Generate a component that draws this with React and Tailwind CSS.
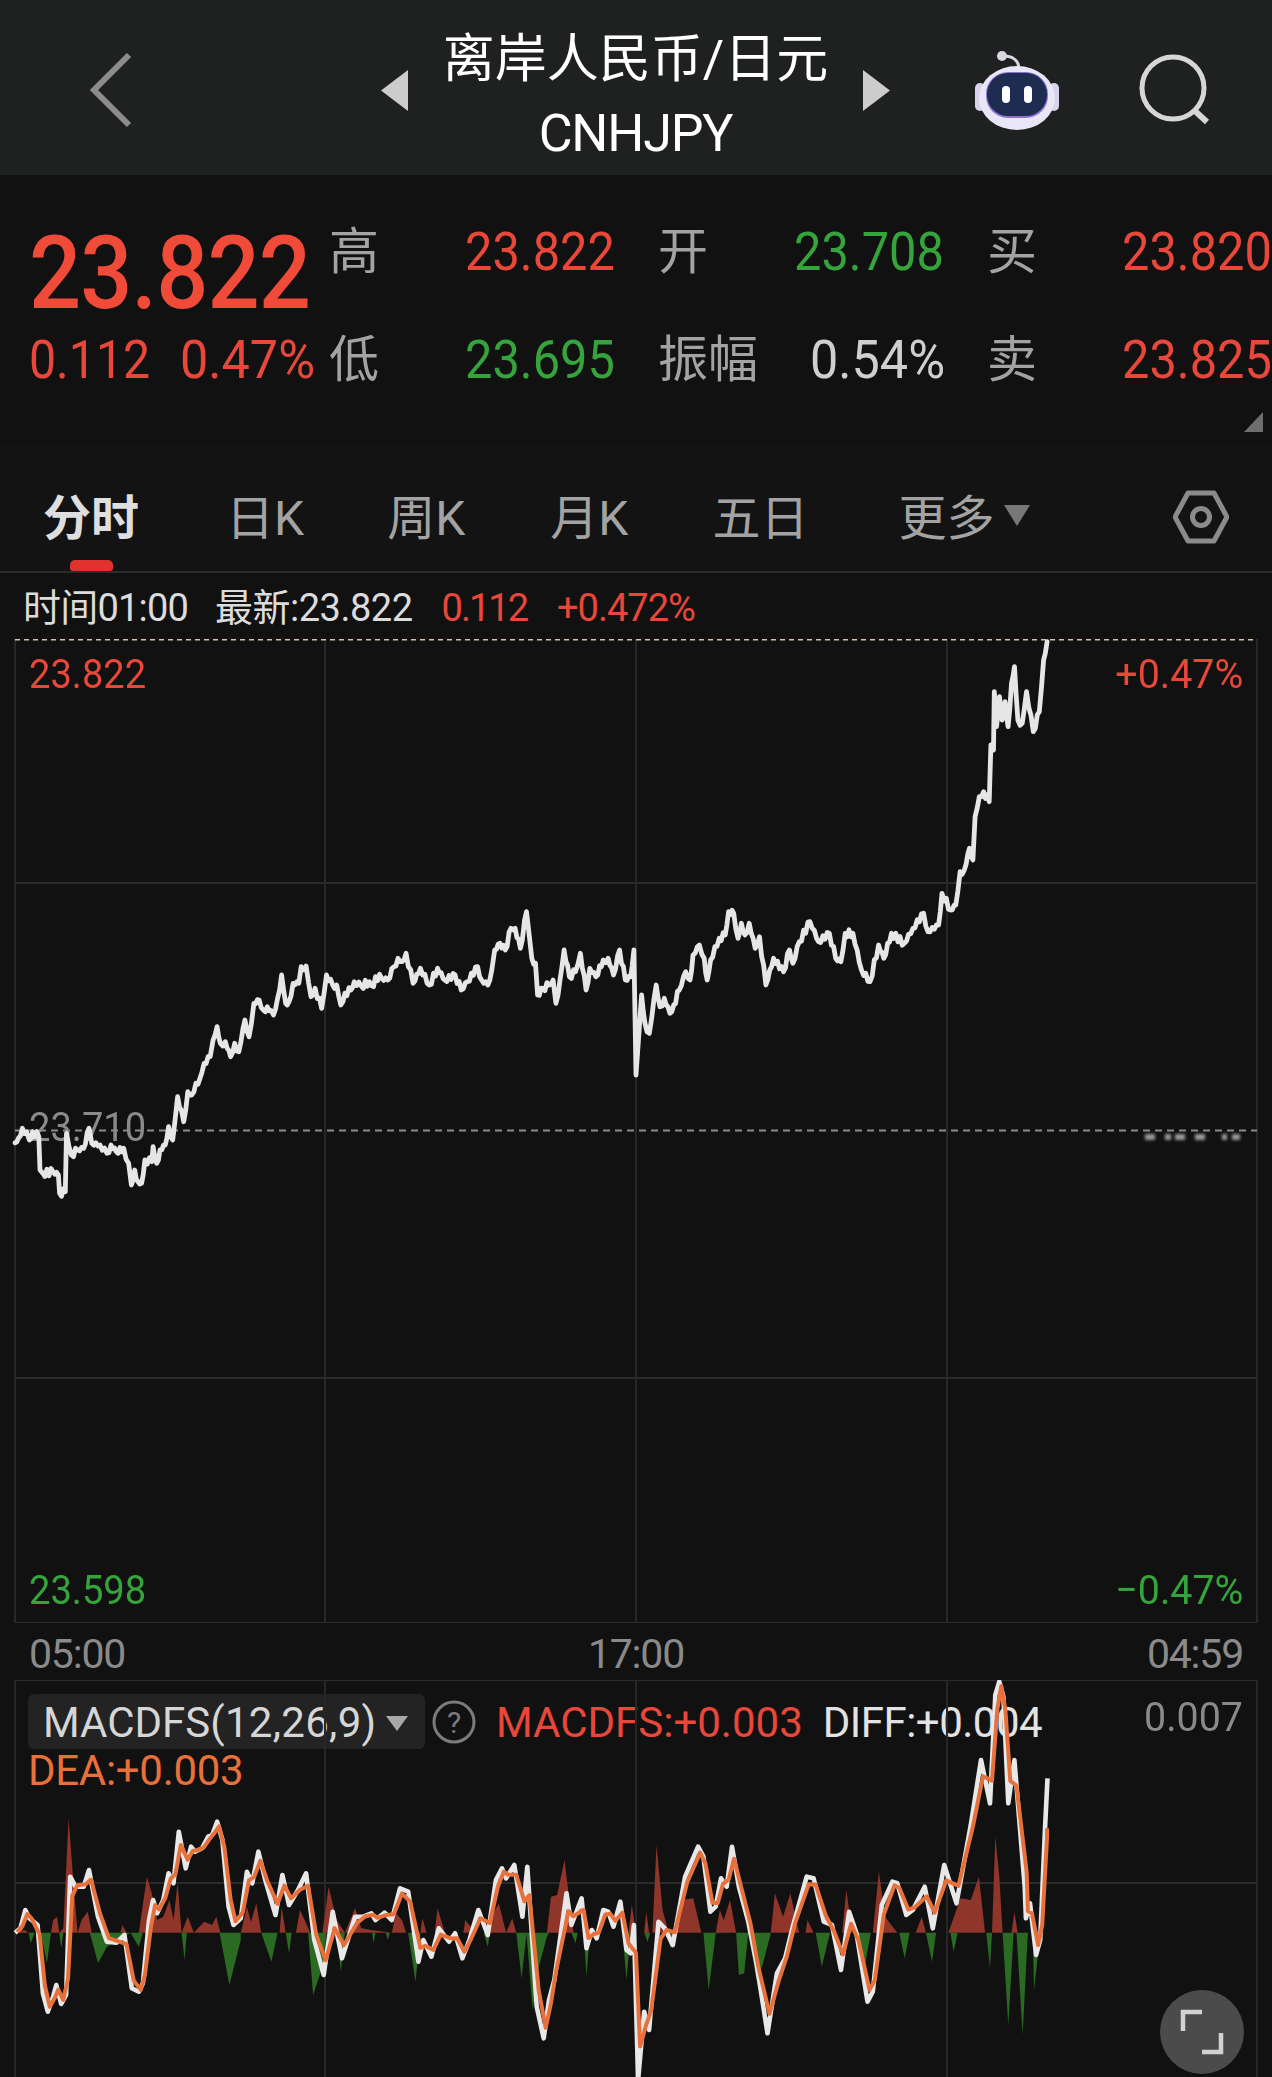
import React from 'react';

// traced from the chart, in crop coordinates (see the from* helpers below)
const priceLeft = [37,848,45,835,55,805,65,815,72,840,80,815,95,830,98,930,105,940,130,935,143,945,146,1000,160,995,163,820,175,885,190,870,205,865,218,805,225,850,245,855,262,880,272,855,285,875,303,865,315,910,322,975,330,930,338,965,347,970,355,900,372,905,375,860,384,910,392,870,405,855,413,800,423,840,435,710,450,785,460,695,470,705,480,670,490,655,500,610,515,590,522,540,532,500,540,550,552,545,565,590,575,550,585,575,600,480,610,530,622,430,635,420,645,450,655,440,670,465,680,415,690,345,700,430,708,425,718,370,732,370,738,320,750,318,762,410,772,385,788,445,800,345,815,375,825,375,835,435,845,400,860,390,868,365,885,378,905,365,915,380,920,350,935,355,950,360,965,320,975,295,985,305,995,280,1012,370,1030,325,1052,375,1072,325,1090,360,1115,345,1130,390,1145,365,1170,320,1180,360,1195,375,1205,330,1212,270,1225,250,1238,270,1252,205,1262,205,1275,265,1290,155,1297,230,1303,295,1312,310,1317,405,1330,385,1345,375,1355,360,1362,430,1372,360,1382,270,1395,350,1410,335,1422,280,1436,390,1445,325,1460,350,1478,300,1490,295,1503,345,1518,270,1532,360,1545,350,1553,270];
const priceRight = [84,1305,97,1065,105,1150,115,1180,131,1035,140,1100,150,1075,163,1120,172,1095,185,1050,200,995,210,1020,217,945,232,915,243,955,250,1020,258,960,278,895,292,885,300,815,312,820,322,895,330,850,338,885,348,850,362,925,372,890,387,1035,405,955,428,995,442,930,450,970,465,905,490,845,510,905,535,880,550,955,562,965,572,880,590,880,610,990,630,1025,650,915,662,955,680,880,710,910,730,865,755,820,765,875,790,855,798,760,818,810,830,795,840,695,850,690,862,625,870,660,875,530,885,470,895,455,908,485,912,315,918,330,920,155,925,260,932,170,938,240,945,185,952,260,960,130,967,80,975,240,985,250,995,155,1011,275,1025,215,1035,60,1043,5];

const diffLeft = [37,998,50,985,62,930,72,955,92,975,105,1180,117,1235,130,1190,138,1155,150,1212,162,1185,172,830,185,860,205,860,218,810,240,950,262,1025,285,1028,305,1005,323,1165,340,1175,350,1150,365,960,375,900,385,940,400,900,413,820,425,850,438,695,455,805,468,740,478,755,495,745,510,710,520,705,532,665,545,720,560,920,572,975,590,955,605,815,618,850,633,755,650,840,675,945,692,825,708,915,730,870,750,820,770,1020,793,1125,815,935,838,1075,870,950,890,950,910,940,920,960,942,938,960,960,980,865,1000,875,1025,1085,1037,1020,1057,1070,1075,985,1100,1025,1115,1000,1133,1075,1150,1020,1172,930,1195,1005,1215,840,1230,805,1240,835,1260,795,1280,950,1292,800,1315,1220,1332,1315,1345,1200,1358,1140,1388,880,1400,975,1425,895,1437,1045,1450,990,1462,1015,1478,930,1490,935,1503,980,1520,905,1535,1050,1545,1060,1553,975];
const diffRight = [15,1440,30,1235,42,1290,65,965,80,985,100,1035,130,830,162,740,175,770,192,935,205,920,218,835,232,860,245,740,262,860,285,965,305,1090,332,1300,355,1120,375,1075,395,975,428,830,445,835,470,965,490,975,512,1110,532,935,550,1000,577,1205,590,1175,612,915,638,845,650,850,672,945,688,930,717,860,737,985,765,795,795,910,830,675,855,480,877,610,890,285,900,245,910,290,922,610,937,480,962,860,965,955,975,910,990,1065,1000,1020,1012,680,1018,535];

const redLeft = [37,998,60,990,70,998,125,998,130,960,140,950,145,998,155,985,168,655,180,850,190,998,200,960,215,935,225,998,295,998,300,975,310,998,340,998,360,830,372,880,385,960,400,950,415,900,425,960,435,850,445,998,460,950,475,998,500,965,520,975,530,950,540,998,590,998,605,920,615,965,628,910,640,998,685,998,690,920,700,998,725,998,735,930,750,970,760,998,790,998,805,860,825,960,845,998,870,925,885,985,910,990,960,998,970,940,985,960,995,998,1030,998,1035,955,1045,998,1065,998,1072,925,1090,998,1135,998,1140,960,1165,998,1190,998,1200,960,1222,910,1240,998,1255,955,1265,998,1340,998,1350,890,1365,885,1383,780,1395,900,1405,998,1540,998,1548,915,1558,998];
const redRight = [30,998,35,935,42,998,50,998,60,735,75,930,90,998,110,998,120,900,150,895,170,998,205,998,215,930,225,960,240,900,255,998,340,998,350,880,370,950,388,880,400,950,410,998,425,998,430,960,445,998,515,998,525,870,540,998,590,998,605,815,620,950,650,998,695,998,710,950,720,998,775,998,805,895,830,900,850,830,865,998,882,998,890,710,900,830,908,998,930,998,937,935,945,998,1018,998,1018,685,1018,998];
const greenLeft = [70,998,75,1030,85,998,100,998,115,1090,125,998,145,998,150,1045,155,998,220,998,240,1090,262,1040,320,998,340,1040,350,998,445,998,452,1080,458,998,538,998,562,1155,590,1020,590,998,640,998,665,1085,680,998,700,998,708,1060,715,998,755,998,767,1185,790,1100,800,998,825,998,835,1115,845,998,912,998,915,1030,920,998,945,998,950,1020,955,998,1000,998,1018,1145,1030,998,1185,998,1195,1040,1200,998,1265,998,1278,1135,1290,1000,1305,1230,1320,1100,1340,1010,1345,998,1400,998,1410,1030,1415,998,1430,998,1437,1130,1445,998,1525,998,1535,1140,1545,998];
const greenRight = [30,998,38,1025,45,998,85,998,95,1045,100,998,175,998,188,1170,205,1000,255,998,262,1125,275,1120,285,1000,305,1140,320,1095,340,1000,340,998,450,998,465,1100,485,998,545,998,570,1100,585,998,655,998,668,1075,680,998,720,998,735,1085,745,998,780,998,788,1055,798,998,868,998,877,1105,882,998,908,998,922,1275,935,998,942,998,957,1305,970,998,982,1000,985,1170,995,1060,1000,998];

const toPoints = (flat, fx, fy) => {
  const pts = [];
  for (let i = 0; i < flat.length; i += 2) pts.push([fx(flat[i]), fy(flat[i + 1])]);
  return pts;
};

// the real line ticks every minute, so add some small wiggle between traced points
const addTicks = (pts) => {
  const out = [];
  pts.forEach((p, i) => {
    out.push(p);
    const next = pts[i + 1];
    if (!next || Math.abs(next[1] - p[1]) > 60) return;
    const steps = Math.max(1, Math.round((next[0] - p[0]) / 2));
    for (let s = 1; s < steps; s++) {
      const t = s / steps;
      const wiggle = (s % 2 ? 1 : -1) * (1.5 + (i % 3));
      out.push([p[0] + (next[0] - p[0]) * t, p[1] + (next[1] - p[1]) * t + wiggle]);
    }
  });
  return out;
};

const pricePts = addTicks([
  ...toPoints(priceLeft, (x) => x / 2.45, (y) => 860 + y / 3),
  ...toPoints(priceRight, (x) => 600 + x / 2.333, (y) => 640 + y / 3),
]);

const macdX = (x) => x / 2.45;
const macdXr = (x) => 632 + x / 2.45;
const macdY = (y) => 1600 + y / 3;

const diffPts = [...toPoints(diffLeft, macdX, macdY), ...toPoints(diffRight, macdXr, macdY)];
const redPts = [...toPoints(redLeft, macdX, macdY), ...toPoints(redRight, macdXr, macdY)];
const greenPts = [...toPoints(greenLeft, macdX, macdY), ...toPoints(greenRight, macdXr, macdY)];

// DEA follows DIFF, just smoother and a touch late
const deaPts = diffPts.map((p, i) => {
  const prev = diffPts[Math.max(i - 1, 0)];
  const next = diffPts[Math.min(i + 1, diffPts.length - 1)];
  return [p[0] + 2, prev[1] * 0.15 + p[1] * 0.7 + next[1] * 0.15];
});
deaPts[deaPts.length - 1] = [1047, macdY(685)];

const str = (pts) => pts.map((p) => `${p[0].toFixed(1)},${p[1].toFixed(1)}`).join(' ');

const verticals = [15, 325, 636, 947, 1257];

const BackIcon = () => (
  <svg width="44" height="76" viewBox="0 0 44 76" fill="none">
    <path d="M40 3 L5 38 L40 73" stroke="#8c8c8c" strokeWidth="6" />
  </svg>
);

const RobotIcon = () => (
  <svg width="84" height="80" viewBox="0 0 84 80" fill="none">
    <path d="M29 6 C36 6 43 9 44 18" stroke="#d9d6e6" strokeWidth="3" />
    <circle cx="27" cy="6" r="5" fill="#d8d8de" />
    <rect x="0" y="33" width="10" height="28" rx="5" fill="#d7d3ea" />
    <rect x="74" y="33" width="10" height="28" rx="5" fill="#d7d3ea" />
    <ellipse cx="42" cy="48" rx="38" ry="32" fill="#e9e6f7" />
    <rect x="11" y="22" width="62" height="46" rx="22" fill="#8a74cf" />
    <rect x="12" y="23" width="60" height="43" rx="21" fill="#1f2c52" />
    <rect x="27" y="36" width="8" height="17" rx="4" fill="#ffffff" />
    <rect x="49" y="36" width="8" height="17" rx="4" fill="#ffffff" />
  </svg>
);

const SearchIcon = () => (
  <svg width="72" height="72" viewBox="0 0 72 72" fill="none">
    <circle cx="34" cy="34" r="31" stroke="#d6d6d6" strokeWidth="5" />
    <path d="M56 57 L68 68" stroke="#d6d6d6" strokeWidth="6" />
  </svg>
);

const HexIcon = () => (
  <svg width="56" height="54" viewBox="0 0 56 54" fill="none">
    <path d="M15 3 H41 L54 27 L41 51 H15 L2 27 Z" stroke="#8b8b8b" strokeWidth="5" strokeLinejoin="round" />
    <circle cx="28" cy="27" r="8.5" stroke="#8b8b8b" strokeWidth="5" />
  </svg>
);

const StatRow = ({ cells }) => (
  <div className="grid h-[108px] grid-cols-[136px_193px_136px_193px_135px_1fr] items-center whitespace-nowrap">
    {cells.map((c, i) => (
      <span key={i} className={c.className}>{c.text}</span>
    ))}
  </div>
);

// the app's digits are narrower than Roboto's
const label = 'text-[50px] leading-none text-[#a3a3a3]';
const red = 'inline-block origin-left scale-x-[0.92] text-[53px] leading-none text-[#e8473a]';
const green = 'inline-block origin-left scale-x-[0.92] text-[53px] leading-none text-[#36a43c]';
const axisL = 'absolute left-[29px] inline-block origin-left scale-x-[0.93] text-[41px] leading-[46px]';
const axisR = 'absolute right-[29px] inline-block origin-right scale-x-[0.96] text-[41px] leading-[46px]';

const Tab = ({ children, className }) => (
  <span className={`whitespace-nowrap text-[48px] leading-none ${className}`}>{children}</span>
);

const PriceChart = () => (
  <div className="relative h-[984px]">
    <span className={`${axisL} top-[12px] text-[#e8473a]`}>23.822</span>
    <span className={`${axisR} top-[12px] text-[#e8473a]`}>+0.47%</span>
    <span className={`${axisL} top-[465px] text-[#8a8a8a]`}>23.710</span>
    <span className={`${axisL} top-[928px] text-[#36a43c]`}>23.598</span>
    <span className={`${axisR} top-[928px] text-[#36a43c]`}>−0.47%</span>
    <svg className="absolute inset-0" width="1272" height="984" viewBox="0 639 1272 984" fill="none">
      {verticals.map((x) => (
        <line key={x} x1={x} y1="639" x2={x} y2="1623" stroke="#272727" strokeWidth="2" />
      ))}
      <line x1="15" y1="883" x2="1257" y2="883" stroke="#2b2b2b" strokeWidth="2" />
      <line x1="15" y1="1378" x2="1257" y2="1378" stroke="#2b2b2b" strokeWidth="2" />
      <line x1="15" y1="1623" x2="1257" y2="1623" stroke="#2b2b2b" strokeWidth="2" />
      <line x1="15" y1="639.5" x2="1257" y2="639.5" stroke="#d9c49e" strokeWidth="2" strokeDasharray="5 4" />
      <line x1="15" y1="1130.5" x2="1257" y2="1130.5" stroke="#8a8a8a" strokeWidth="2" strokeDasharray="7 5" />
      <polyline points={str(pricePts)} stroke="#e6e6e6" strokeWidth="4.8" strokeLinejoin="round" strokeLinecap="round" />
      <g className="blur-[1.5px]" fill="#9a9a9a">
        <rect x="1145" y="1134" width="10" height="6" />
        <rect x="1165" y="1134" width="6" height="6" />
        <rect x="1175" y="1134" width="10" height="6" />
        <rect x="1195" y="1134" width="10" height="6" />
        <rect x="1222" y="1134" width="5" height="6" />
        <rect x="1232" y="1134" width="8" height="6" />
      </g>
    </svg>
  </div>
);

const MacdChart = () => (
  <div className="relative h-[397px] overflow-hidden">
    <div className="absolute left-[28px] top-[14px] flex h-[55px] items-center whitespace-nowrap text-[42px] leading-none">
      <div className="flex h-[55px] w-[397px] items-center rounded-[6px] bg-[#232323] pl-[15px] pt-[3px] text-[#d6d6d6]">
        <span>MACDFS</span>
        <span className="tracking-[0.3px]">(12,26,9)</span>
        <svg className="ml-[9px]" width="22" height="15" viewBox="0 0 22 15">
          <path d="M0 0 H22 L11 15 Z" fill="#a8a8a8" />
        </svg>
      </div>
      <svg className="ml-[7px]" width="44" height="44" viewBox="0 0 44 44" fill="none">
        <circle cx="22" cy="22" r="20" stroke="#7b7b7b" strokeWidth="3" />
        <text x="22" y="33" textAnchor="middle" fontSize="30" fill="#7b7b7b">?</text>
      </svg>
      <span className="ml-[20px] pt-[3px] text-[#e8473a]">MACDFS:+0.003</span>
      <span className="ml-[20px] pt-[3px] tracking-[-0.5px] text-[#e3e3e3]">DIFF:+0.004</span>
    </div>
    <span className="absolute left-[28px] top-[68px] text-[42px] leading-[46px] tracking-[-0.3px] text-[#e8703a]">DEA:+0.003</span>
    <span className={`${axisR} top-[14px] text-[#8a8a8a]`}>0.007</span>
    <svg className="absolute inset-0" width="1272" height="397" viewBox="0 1680 1272 397" fill="none">
      {verticals.map((x) => (
        <line key={x} x1={x} y1="1680" x2={x} y2="2077" stroke="#272727" strokeWidth="2" />
      ))}
      <line x1="15" y1="1680" x2="1257" y2="1680" stroke="#2b2b2b" strokeWidth="2" />
      <line x1="15" y1="1883" x2="1257" y2="1883" stroke="#2b2b2b" strokeWidth="2" />
      <polygon points={str(redPts)} fill="#8f3529" />
      <polygon points={str(greenPts)} fill="#2a6a22" />
      <polyline points={str(diffPts)} stroke="#e8e8e8" strokeWidth="4.6" strokeLinejoin="round" />
      <polyline points={str(deaPts)} stroke="#e8703a" strokeWidth="4" strokeLinejoin="round" />
    </svg>
    <div className="absolute left-[1160px] top-[310px] flex h-[84px] w-[84px] items-center justify-center rounded-full bg-[#4b4b4b]">
      <svg width="44" height="46" viewBox="0 0 44 46" fill="none">
        <path d="M22 3 H3 V22" stroke="#d2d2d2" strokeWidth="4.5" />
        <path d="M22 43 H41 V24" stroke="#d2d2d2" strokeWidth="4.5" />
      </svg>
    </div>
  </div>
);

const App = () => {
  return (
    <div className="flex h-[2077px] w-[1272px] flex-col overflow-hidden bg-[#111111] font-[Roboto,'Noto_Sans_CJK_SC',sans-serif]">
      {/* top bar */}
      <header className="flex h-[175px] shrink-0 items-center bg-[#1f2020] pt-[5px]">
        <div className="ml-[89px] w-[292px]"><BackIcon /></div>
        <svg width="27" height="41" viewBox="0 0 27 41"><path d="M27 0 V41 L0 20.5 Z" fill="#cccccc" /></svg>
        <div className="flex w-[455px] flex-col items-center pt-[12px] text-white">
          <span className="text-[52px] leading-[62px]">离岸人民币/日元</span>
          <span className="mt-[14px] text-[52px] leading-[58px] tracking-[-1.2px]">CNHJPY</span>
        </div>
        <svg width="27" height="41" viewBox="0 0 27 41"><path d="M0 0 V41 L27 20.5 Z" fill="#cccccc" /></svg>
        <div className="ml-[85px]"><RobotIcon /></div>
        <div className="ml-[80px]"><SearchIcon /></div>
      </header>

      {/* quote */}
      <section className="relative flex h-[271px] shrink-0 bg-[#111111]">
        <div className="w-[329px] pl-[29px] pt-[38px] whitespace-nowrap">
          <div className="h-[120px] origin-left scale-x-[0.9] text-[102px] font-medium leading-[120px] tracking-[-1px] text-[#f04a38]">23.822</div>
          <div className="flex h-[54px] items-center text-[#e8473a] text-[53px] leading-none">
            <span className="inline-block w-[151px] origin-left scale-x-[0.91]">0.112</span>
            <span className="inline-block origin-left scale-x-[0.95]">0.47%</span>
          </div>
        </div>
        <div className="flex-1 pt-[23px]">
          <StatRow cells={[
            { text: '高', className: label },
            { text: '23.822', className: red },
            { text: '开', className: label },
            { text: '23.708', className: green },
            { text: '买', className: label },
            { text: '23.820', className: red },
          ]} />
          <StatRow cells={[
            { text: '低', className: label },
            { text: '23.695', className: green },
            { text: '振幅', className: label },
            { text: '0.54%', className: 'ml-[16px] inline-block origin-left scale-x-[0.95] text-[53px] leading-none text-[#cfcfcf]' },
            { text: '卖', className: label },
            { text: '23.825', className: red },
          ]} />
        </div>
        <svg className="absolute bottom-[14px] right-[9px]" width="19" height="20" viewBox="0 0 19 20">
          <path d="M19 0 V20 H0 Z" fill="#6e6e6e" />
        </svg>
      </section>

      {/* period tabs */}
      <nav className="relative flex h-[127px] shrink-0 items-center border-b-2 border-[#2b2b2b] bg-[#131313] pt-[20px] text-[#a3a3a3]">
        <Tab className="ml-[43px] font-bold text-[#dedede]">分时</Tab>
        <Tab className="ml-[87px]">日K</Tab>
        <Tab className="ml-[83px]">周K</Tab>
        <Tab className="ml-[85px]">月K</Tab>
        <Tab className="ml-[84px]">五日</Tab>
        <Tab className="ml-[90px]">更多</Tab>
        <svg className="ml-[10px] mb-[6px]" width="26" height="21" viewBox="0 0 26 21"><path d="M0 0 H26 L13 21 Z" fill="#777777" /></svg>
        <div className="ml-[143px] mb-[4px]"><HexIcon /></div>
        <span className="absolute bottom-0 left-[70px] h-[11px] w-[43px] rounded-t-[5px] rounded-b-[3px] bg-[#e0322f]" />
      </nav>

      {/* crosshair info */}
      <div className="flex h-[66px] shrink-0 items-center whitespace-nowrap pl-[23px] pt-[4px] text-[38px] leading-none tracking-[-0.5px] text-[#dcdcdc]">
        <span className="tracking-[-0.8px]">时间01:00</span>
        <span className="ml-[27px]">最新:23.822</span>
        <span className="ml-[29px] tracking-[-2px] text-[#e8473a]">0.112</span>
        <span className="ml-[30px] tracking-[-1px] text-[#e8473a]">+0.472%</span>
      </div>

      <PriceChart />

      {/* time axis */}
      <div className="flex h-[57px] shrink-0 items-center justify-between px-[29px] pt-[5px] text-[41px] leading-none tracking-[-1.2px] text-[#8a8a8a]">
        <span>05:00</span>
        <span>17:00</span>
        <span>04:59</span>
      </div>

      <MacdChart />
    </div>
  );
};

export default App;
